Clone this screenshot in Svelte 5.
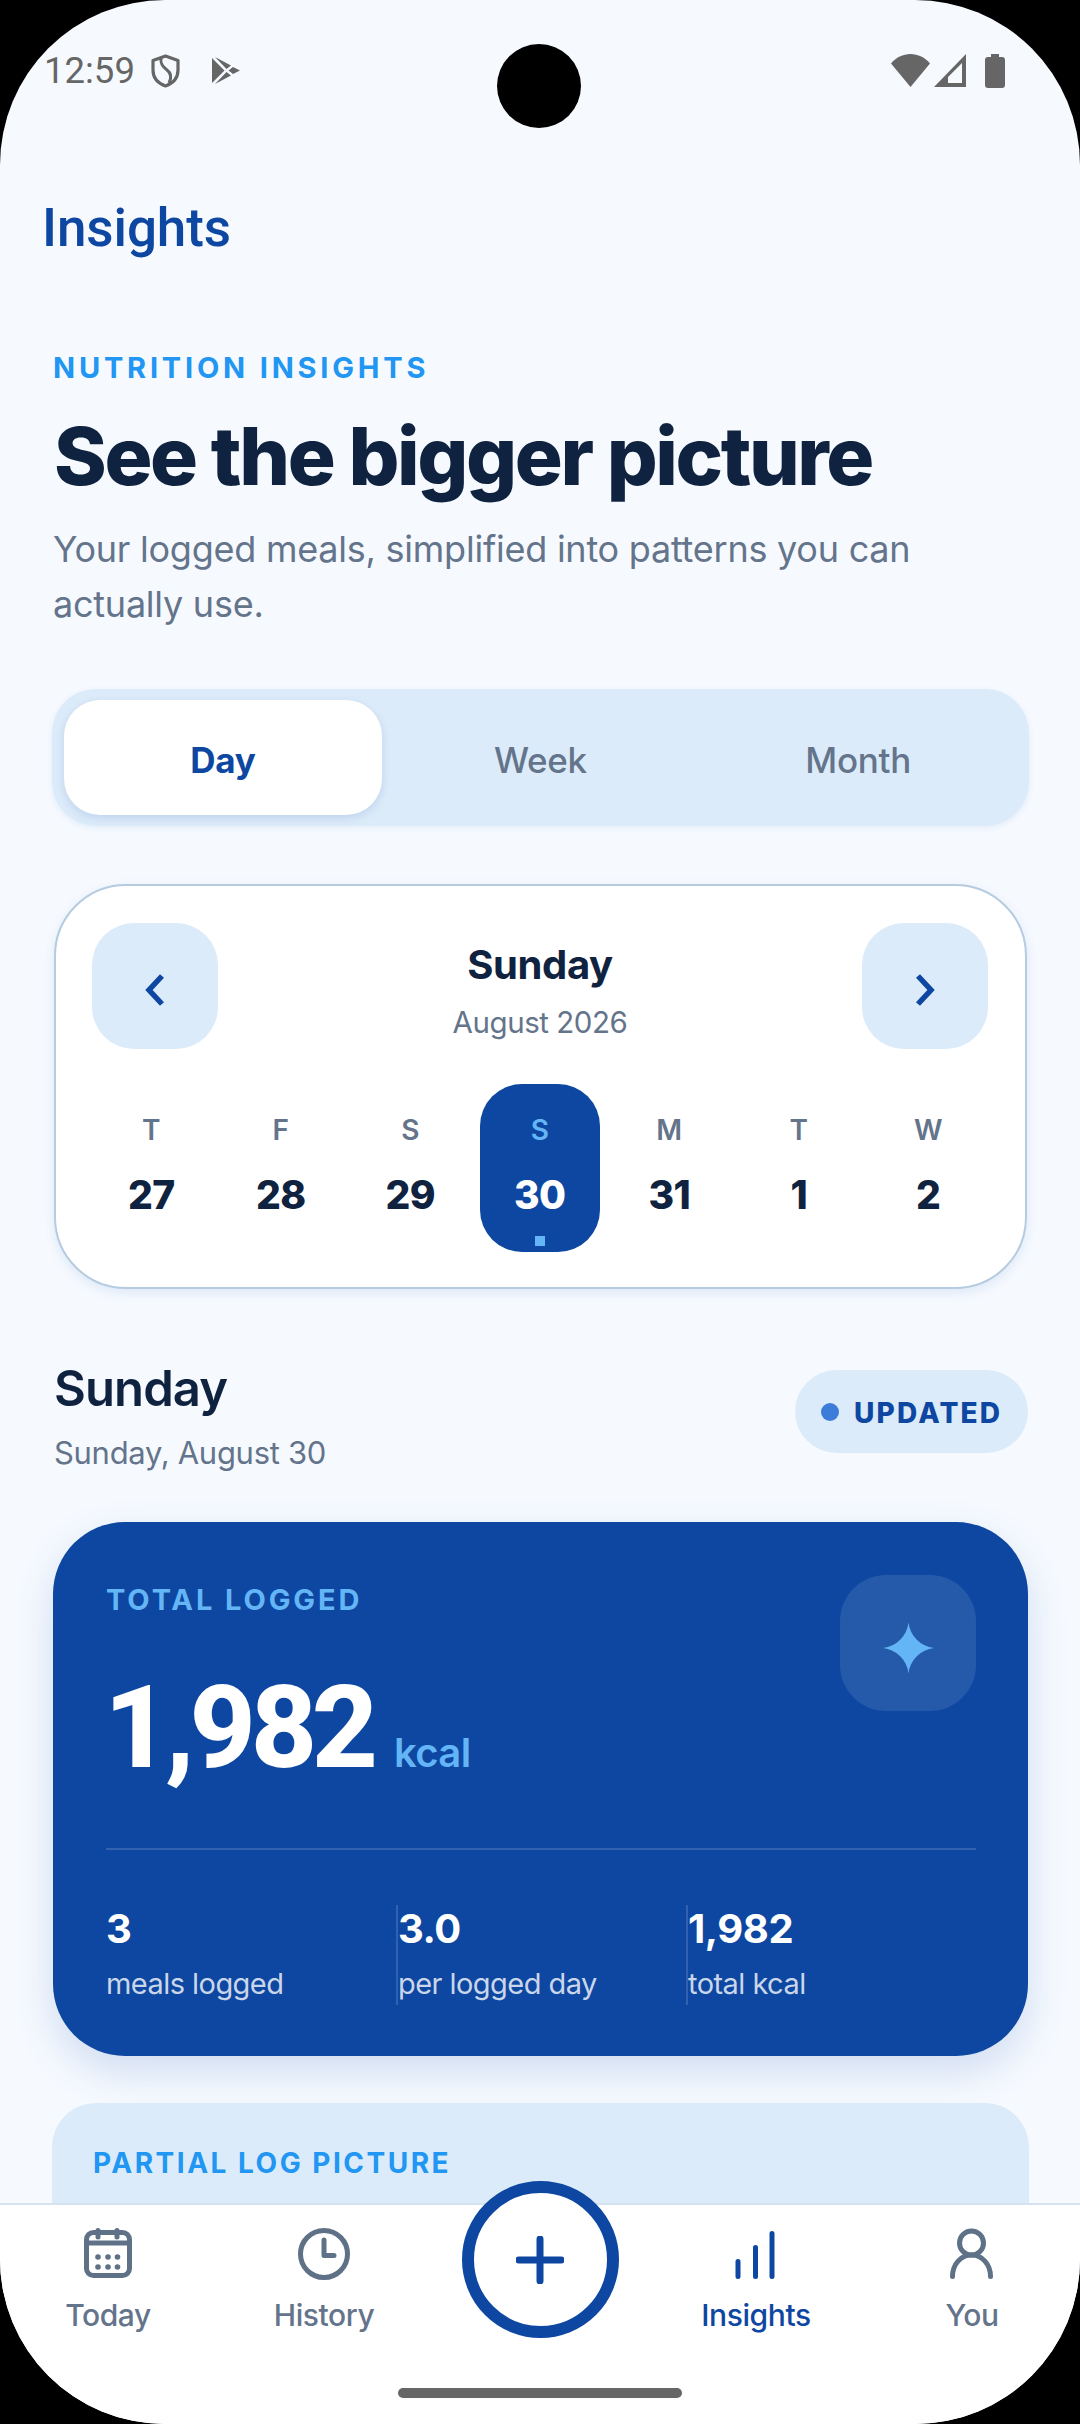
<script>
  const days = [
    { l: 'T', n: '27' }, { l: 'F', n: '28' }, { l: 'S', n: '29' },
    { l: 'S', n: '30', on: true }, { l: 'M', n: '31' }, { l: 'T', n: '1' }, { l: 'W', n: '2' }
  ];
  const stats = [
    { v: '3', k: 'meals logged' },
    { v: '3.0', k: 'per logged day' },
    { v: '1,982', k: 'total kcal' }
  ];
</script>

<div class="screen">
  <div class="camera"></div>

  <header class="status">
    <div class="status-left">
      <span class="time">12:59</span>
      <svg class="shield" viewBox="0 0 29 34" aria-hidden="true">
        <path d="M14.5 2 L27 6.5 V16 C27 24 21.5 29.5 14.5 32 C7.5 29.5 2 24 2 16 V6.5 Z" fill="none" stroke="#666" stroke-width="3.2" stroke-linejoin="round"/>
        <path d="M10 4 C9 10 12 13 16 16 C20 19 21 23 18 29" fill="none" stroke="#666" stroke-width="3"/>
      </svg>
      <svg class="play" viewBox="0 0 28 27" aria-hidden="true">
        <path fill="#666" d="M0 1 L12.5 13.5 L0 26Z M3 0 L19 8.5 L14.5 12Z M3 27 L19 18.5 L14.5 15Z M21 10 L28 13.5 L21 17 L16.5 13.5Z"/>
      </svg>
    </div>
    <div class="status-right">
      <svg class="wifi" viewBox="0 0 39 33" aria-hidden="true"><path fill="#666" d="M19.5 33 L0 9.5 C5 3.5 12 0 19.5 0 C27 0 34 3.5 39 9.5Z"/></svg>
      <svg class="signal" viewBox="0 0 32 33" aria-hidden="true"><path fill="#666" fill-rule="evenodd" d="M32 0 V33 H0Z M14 23 L28 9 V29 H14Z"/></svg>
      <svg class="battery" viewBox="0 0 20 34" aria-hidden="true"><path fill="#666" d="M6 0 H14 V3 H17 A3 3 0 0 1 20 6 V31 A3 3 0 0 1 17 34 H3 A3 3 0 0 1 0 31 V6 A3 3 0 0 1 3 3 H6Z"/></svg>
    </div>
  </header>

  <div class="appbar"><h2>Insights</h2></div>

  <main class="content">
    <p class="eyebrow">NUTRITION INSIGHTS</p>
    <h1>See the bigger picture</h1>
    <p class="lede">Your logged meals, simplified into patterns you can actually use.</p>

    <div class="segment">
      <div class="seg active">Day</div>
      <div class="seg">Week</div>
      <div class="seg">Month</div>
    </div>

    <section class="calendar">
      <div class="cal-head">
        <button class="nav-btn" aria-label="Previous">
          <svg width="20" height="32" viewBox="0 0 20 32"><path d="M17 2 L4 16 L17 30" fill="none" stroke="#0d47a1" stroke-width="5.5"/></svg>
        </button>
        <div class="cal-title">
          <div class="cal-day">Sunday</div>
          <div class="cal-month">August 2026</div>
        </div>
        <button class="nav-btn" aria-label="Next">
          <svg width="20" height="32" viewBox="0 0 20 32"><path d="M3 2 L16 16 L3 30" fill="none" stroke="#0d47a1" stroke-width="5.5"/></svg>
        </button>
      </div>
      <div class="days">
        {#each days as d}
          <div class="day" class:on={d.on}>
            <span class="dl">{d.l}</span>
            <span class="dn">{d.n}</span>
            <span class="dd"></span>
          </div>
        {/each}
      </div>
    </section>

    <div class="section-head">
      <div>
        <div class="sh-title">Sunday</div>
        <div class="sh-sub">Sunday, August 30</div>
      </div>
      <div class="badge"><span class="badge-dot"></span>UPDATED</div>
    </div>

    <section class="hero">
      <div class="hero-top">
        <div>
          <div class="hero-label">TOTAL LOGGED</div>
          <div class="hero-value"><span class="big">1,982</span><span class="unit">kcal</span></div>
        </div>
        <div class="spark">
          <svg width="51" height="52" viewBox="0 0 51 51"><path fill="#64b5f6" d="M25.5 0 A29 29 0 0 0 51 25.5 A29 29 0 0 0 25.5 51 A29 29 0 0 0 0 25.5 A29 29 0 0 0 25.5 0Z"/></svg>
        </div>
      </div>
      <div class="hero-stats">
        {#each stats as s}
          <div class="stat">
            <div class="sv">{s.v}</div>
            <div class="sk">{s.k}</div>
          </div>
        {/each}
      </div>
    </section>

    <section class="partial">
      <p class="partial-label">PARTIAL LOG PICTURE</p>
    </section>
  </main>

  <nav class="bottom">
    <div class="tab">
      <svg class="ico" width="52" height="52" viewBox="0 0 52 52" fill="none" stroke="#5f7187" stroke-width="5">
        <rect x="4.5" y="4.5" width="43" height="43" rx="7"/>
        <path d="M4.5 15 H47.5"/>
        <path d="M16 2.5 V9 M35 2.5 V9" stroke-linecap="round"/>
        <g fill="#5f7187" stroke="none">
          <circle cx="16" cy="29" r="2.8"/><circle cx="26" cy="29" r="2.8"/><circle cx="35.5" cy="29" r="2.8"/>
          <circle cx="16" cy="39" r="2.8"/><circle cx="26" cy="39" r="2.8"/><circle cx="35.5" cy="39" r="2.8"/>
        </g>
      </svg>
      <span>Today</span>
    </div>
    <div class="tab">
      <svg class="ico" width="52" height="52" viewBox="0 0 52 52" fill="none" stroke="#5f7187" stroke-width="5">
        <circle cx="26" cy="26" r="23.5"/>
        <path d="M26 12 V27.5 H36" stroke-linejoin="round" stroke-linecap="round"/>
      </svg>
      <span>History</span>
    </div>
    <div class="tab fab-cell">
      <button class="fab" aria-label="Add">
        <svg width="48" height="48" viewBox="0 0 48 48"><path d="M24 3 V45 M3 24 H45" stroke="#0d47a1" stroke-width="7" stroke-linecap="round"/></svg>
      </button>
    </div>
    <div class="tab current">
      <svg class="ico" width="52" height="52" viewBox="0 0 52 52" fill="none" stroke="#0d47a1" stroke-width="5" stroke-linecap="round">
        <path d="M8 48.5 V33.5 M25.5 48.5 V19.5 M42 48.5 V5.5"/>
      </svg>
      <span>Insights</span>
    </div>
    <div class="tab">
      <svg class="ico" width="52" height="52" viewBox="0 0 52 52" fill="none" stroke="#5f7187" stroke-width="5" stroke-linecap="round">
        <circle cx="25.5" cy="15" r="12"/>
        <path d="M6.5 48.5 C6.5 36 15 27 25.5 27 C36 27 44.5 36 44.5 48.5"/>
      </svg>
      <span>You</span>
    </div>
    <div class="home"></div>
  </nav>
</div>

<style>
  :global(body) { margin: 0; background: #000; }
  * { box-sizing: border-box; }
  p, h1, h2 { margin: 0; }

  .screen {
    position: relative;
    width: 1080px;
    height: 2424px;
    display: flex;
    flex-direction: column;
    background: #f6faff;
    border-radius: 165px;
    overflow: hidden;
    font-family: Inter, "Noto Sans", sans-serif;
  }
  .camera {
    position: absolute;
    left: 497px;
    top: 44px;
    width: 84px;
    height: 84px;
    border-radius: 50%;
    background: #000;
  }

  .status {
    flex: none;
    height: 110px;
    padding: 54px 75px 0 44px;
    display: flex;
    justify-content: space-between;
    align-items: flex-start;
  }
  .status-left { display: flex; align-items: flex-start; }
  .time {
    font: 400 36.5px/36px Roboto, sans-serif;
    color: #666;
    width: 107px;
    margin-top: -1px;
  }
  .shield { width: 29px; height: 34px; }
  .play { width: 28px; height: 27px; margin: 3px 0 0 32px; }
  .status-right { display: flex; align-items: flex-start; }
  .wifi { width: 39px; height: 33px; }
  .signal { width: 32px; height: 33px; margin-left: 4px; }
  .battery { width: 20px; height: 34px; margin-left: 19px; }

  .appbar { flex: none; height: 238px; padding: 88px 0 0 42px; }
  .appbar h2 {
    font: 500 53px/60px Roboto, sans-serif;
    color: #0d47a1;
    letter-spacing: -0.1px;
  }

  .content { flex: 1; min-height: 0; padding: 0 51px 0 52px; overflow: hidden; }
  .eyebrow {
    font-weight: 700;
    font-size: 29px;
    line-height: 40px;
    letter-spacing: 3.8px;
    color: #2196f3;
    margin: 0 0 0 1px;
  }
  h1 {
    font-weight: 800;
    font-size: 80px;
    line-height: 100px;
    letter-spacing: -2.4px;
    color: #0f2340;
    margin: 18px 0 0 2px;
    white-space: nowrap;
  }
  .lede {
    font-weight: 400;
    font-size: 36px;
    line-height: 55px;
    letter-spacing: -0.24px;
    color: #64748b;
    margin: 16px 60px 0 1px;
  }

  .segment {
    margin-top: 57px;
    height: 137px;
    padding: 11px 12px;
    display: grid;
    grid-template-columns: repeat(3, 1fr);
    background: #dcebf9;
    border-radius: 44px;
    box-shadow: 0 2px 6px rgba(13, 71, 161, 0.08);
  }
  .seg {
    display: flex;
    align-items: center;
    justify-content: center;
    padding-top: 4px;
    font-size: 35px;
    font-weight: 500;
    letter-spacing: -0.3px;
    color: #64748b;
    border-radius: 36px;
  }
  .seg.active {
    background: #fff;
    color: #0d47a1;
    font-weight: 700;
    box-shadow: 0 3px 8px rgba(13, 71, 161, 0.14);
  }

  .calendar {
    margin: 58px 2px 0;
    height: 405px;
    padding: 37px 37px 37px 36px;
    background: #fff;
    border: 2px solid #b5cbe0;
    border-radius: 72px;
    box-shadow: 0 4px 12px rgba(13, 71, 161, 0.1);
  }
  .cal-head { display: flex; justify-content: space-between; align-items: flex-start; }
  .nav-btn {
    width: 126px;
    height: 126px;
    border: 0;
    padding: 8px 0 0;
    border-radius: 42px;
    background: #dcebf9;
    display: flex;
    align-items: center;
    justify-content: center;
  }
  .cal-title { text-align: center; padding-top: 16px; }
  .cal-day {
    font-size: 40px;
    line-height: 52px;
    font-weight: 700;
    letter-spacing: -0.4px;
    color: #0f2340;
  }
  .cal-month {
    font-size: 29.5px;
    line-height: 40px;
    letter-spacing: -0.45px;
    color: #64748b;
    margin-top: 11px;
  }
  .days {
    margin: 35px -6px 0 -5.5px;
    display: grid;
    grid-template-columns: repeat(7, 129.5px);
  }
  .day {
    justify-self: center;
    width: 120px;
    height: 168px;
    padding-top: 29px;
    border-radius: 42px;
    display: flex;
    flex-direction: column;
    align-items: center;
  }
  .dl { font-size: 28px; line-height: 34px; font-weight: 600; color: #64748b; }
  .dn { font-size: 39px; line-height: 48px; font-weight: 800; letter-spacing: -0.6px; color: #0f2340; margin-top: 24px; }
  .dd { width: 10px; height: 10px; margin-top: 17px; }
  .day.on { background: #0d47a1; }
  .day.on .dl { color: #64b5f6; }
  .day.on .dn { color: #fff; }
  .day.on .dd { background: #64b5f6; }

  .section-head {
    margin: 70px 1px 0 2px;
    display: flex;
    justify-content: space-between;
    align-items: flex-start;
  }
  .sh-title { font-size: 49px; line-height: 60px; font-weight: 600; letter-spacing: -0.9px; color: #0f2340; }
  .sh-sub { font-size: 31px; line-height: 44px; letter-spacing: -0.3px; color: #64748b; margin-top: 12px; }
  .badge {
    margin-top: 11px;
    height: 83px;
    width: 233px;
    padding: 2px 0 0 26px;
    display: flex;
    align-items: center;
    gap: 15px;
    border-radius: 42px;
    background: #dcebf9;
    color: #0d47a1;
    font-size: 28px;
    font-weight: 800;
    letter-spacing: 2.2px;
    white-space: nowrap;
  }
  .badge-dot { flex: none; width: 18px; height: 18px; border-radius: 50%; background: #3b7dd8; margin-top: -2px; }

  .hero {
    margin: 47px 1px 0;
    height: 534px;
    padding: 53px 52px 0 53px;
    background: #0d47a1;
    border-radius: 72px;
    box-shadow: 0 16px 40px rgba(13, 71, 161, 0.16);
    color: #fff;
  }
  .hero-top { display: flex; justify-content: space-between; align-items: flex-start; height: 213px; }
  .hero-label {
    margin-top: 7px;
    font-size: 29px;
    line-height: 36px;
    font-weight: 700;
    letter-spacing: 2.9px;
    color: #64b5f6;
  }
  .hero-value { display: flex; align-items: baseline; margin-top: 50px; line-height: 120px; }
  .big {
    font-family: Roboto, sans-serif;
    font-size: 115px;
    line-height: 120px;
    font-weight: 800;
    letter-spacing: -5.2px;
    margin-left: -2px;
  }
  .unit { font-size: 40px; font-weight: 600; letter-spacing: -0.6px; color: #64b5f6; margin-left: 21px; }
  .spark {
    width: 136px;
    height: 136px;
    padding-top: 10px;
    border-radius: 46px;
    background: rgba(255, 255, 255, 0.1);
    display: flex;
    align-items: center;
    justify-content: center;
  }
  .hero-stats {
    margin-top: 60px;
    border-top: 2px solid rgba(255, 255, 255, 0.15);
    padding-top: 55px;
    display: grid;
    grid-template-columns: 290px 290px 1fr;
  }
  .stat { height: 100px; }
  .stat + .stat { border-left: 2px solid rgba(255, 255, 255, 0.15); }
  .sv { font-size: 40px; line-height: 48px; font-weight: 700; letter-spacing: -0.4px; }
  .sk { font-size: 29px; line-height: 42px; letter-spacing: -0.55px; color: rgba(255, 255, 255, 0.78); margin-top: 10px; }

  .partial {
    margin-top: 47px;
    height: 300px;
    padding: 42px 41px;
    background: #dcebf9;
    border-radius: 44px;
  }
  .partial-label {
    font-size: 28px;
    line-height: 36px;
    font-weight: 700;
    letter-spacing: 2.5px;
    color: #2196f3;
  }

  .bottom {
    flex: none;
    position: relative;
    z-index: 2;
    height: 221px;
    display: grid;
    grid-template-columns: repeat(5, 216px);
    background: #fff;
    border-top: 2px solid #d5e2f0;
  }
  .tab {
    padding-top: 23px;
    display: flex;
    flex-direction: column;
    align-items: center;
    font-size: 30px;
    line-height: 40px;
    font-weight: 500;
    letter-spacing: -0.4px;
    color: #64748b;
  }
  .tab .ico { display: block; margin-bottom: 15px; }
  .tab.current { color: #0d47a1; }
  .fab-cell { padding-top: 0; }
  .fab {
    width: 157px;
    height: 157px;
    margin-top: -24px;
    padding: 0;
    border-radius: 50%;
    background: #fff;
    border: 12px solid #0d47a1;
    display: flex;
    align-items: center;
    justify-content: center;
  }
  .home {
    position: absolute;
    left: 398px;
    bottom: 26px;
    width: 284px;
    height: 10px;
    border-radius: 5px;
    background: #666;
  }
</style>
